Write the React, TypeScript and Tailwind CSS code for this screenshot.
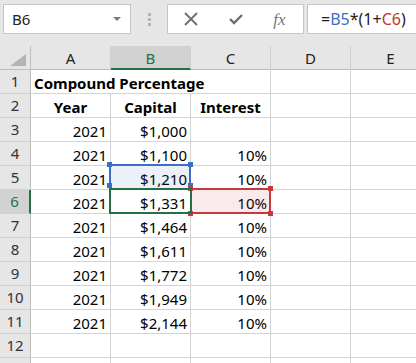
import { ReactNode } from "react";

type Cell = { v?: string; bold?: boolean; align?: "left" | "center" | "right"; open?: boolean };

const cols = ["A", "B", "C", "D", "E"];

const capital = ["$1,000", "$1,100", "$1,210", "$1,331", "$1,464", "$1,611", "$1,772", "$1,949", "$2,144"];

const rows: Cell[][] = [
  [{ v: "Compound Percentage", bold: true, align: "left", open: true }, { open: true }, {}, {}, {}],
  [
    { v: "Year", bold: true, align: "center" },
    { v: "Capital", bold: true, align: "center" },
    { v: "Interest", bold: true, align: "center" },
    {},
    {},
  ],
  ...capital.map((c, i) => [
    { v: "2021", align: "right" as const },
    { v: c, align: "right" as const },
    { v: i === 0 ? "" : "10%", align: "right" as const },
    {},
    {},
  ]),
  [{}, {}, {}, {}, {}],
  [{}, {}, {}, {}, {}],
];

const font = { fontFamily: '"Noto Sans", "Open Sans", sans-serif' };

function Corner({ className }: { className: string }) {
  return <div className={`absolute w-[5px] h-[5px] ${className}`} />;
}

function TopBar() {
  return (
    <div className="h-[46px] bg-[#e6e6e6] flex items-start pt-[4px] pl-[3px]">
      <div className="w-[128px] h-[30px] bg-white border border-[#c6c6c6] flex items-center justify-between pl-[8px] pr-[9px]">
        <span className="text-[15px] text-[#222] leading-none">B6</span>
        <svg width="8" height="4" viewBox="0 0 8 4">
          <path d="M0 0 L8 0 L4 4 Z" fill="#7a7a7a" />
        </svg>
      </div>
      <div className="w-[36px] h-[30px] flex flex-col items-center justify-center gap-[2px]">
        <div className="w-[3px] h-[3px] bg-[#b3b3b3]" />
        <div className="w-[3px] h-[3px] bg-[#b3b3b3]" />
        <div className="w-[3px] h-[3px] bg-[#b3b3b3]" />
      </div>
      <div className="w-[137px] h-[30px] bg-white border border-[#c6c6c6] flex items-center">
        <div className="w-[44px] flex justify-center pl-[1px]">
          <svg width="14" height="14" viewBox="0 0 14 14">
            <path d="M1 1 L13 13 M13 1 L1 13" stroke="#6e6e6e" strokeWidth="1.8" />
          </svg>
        </div>
        <div className="w-[46px] flex justify-center pl-[2px]">
          <svg width="14" height="12" viewBox="0 0 14 12">
            <path d="M1 6 L5 10 L13 2" stroke="#6e6e6e" strokeWidth="2.4" fill="none" />
          </svg>
        </div>
        <div className="flex-1 flex justify-center pr-[2px]">
          <span
            className="italic text-[17px] text-[#777] leading-none"
            style={{ fontFamily: '"Liberation Serif", "DejaVu Serif", serif' }}
          >
            fx
          </span>
        </div>
      </div>
      <div className="ml-[3px] flex-1 h-[30px] bg-white border border-[#c6c6c6] border-r-0 flex items-center pl-[13px] text-[16px] text-[#222] leading-none">
        <span>=</span>
        <span className="text-[#3a6fc4]">B5</span>
        <span>*(1+</span>
        <span className="text-[#c0392b]">C6</span>
        <span>)</span>
      </div>
    </div>
  );
}

function HeaderRow() {
  return (
    <div className="flex h-[24px]">
      <div className="w-[31px] shrink-0 bg-[#e6e6e6] border-r border-b border-[#bdbdbd] flex items-end justify-end pr-[4px] pb-[3px]">
        <svg width="16" height="12" viewBox="0 0 16 12">
          <path d="M16 0 L16 12 L0 12 Z" fill="#b4b4b4" />
        </svg>
      </div>
      {cols.map((c) => {
        const sel = c === "B";
        return (
          <div
            key={c}
            className={`w-[80px] shrink-0 flex items-center justify-center text-[15px] border-r border-[#d0d0d0] ${
              sel ? "bg-[#d2d2d2] text-[#217346] border-b-2 border-b-[#217346]" : "bg-[#e6e6e6] text-[#222] border-b border-b-[#bdbdbd]"
            }`}
          >
            <span className="pt-[2px]">{c}</span>
          </div>
        );
      })}
    </div>
  );
}

function Row({ n, cells }: { n: number; cells: Cell[] }) {
  const sel = n === 6;
  return (
    <div className="flex h-[24px]">
      <div
        className={`w-[31px] shrink-0 border-b border-b-[#d0d0d0] flex items-center justify-center text-[15px] ${
          sel ? "bg-[#d2d2d2] text-[#217346] border-r-2 border-r-[#217346]" : "bg-[#e6e6e6] text-[#333] border-r border-r-[#bdbdbd]"
        }`}
      >
        {n < 13 ? n : ""}
      </div>
      {cells.map((c, i) => (
        <Data key={i} cell={c} />
      ))}
    </div>
  );
}

function Data({ cell }: { cell: Cell }): ReactNode {
  const align = cell.align === "center" ? "justify-center" : cell.align === "left" ? "justify-start pl-[3px]" : "justify-end pr-[3px]";
  return (
    <div
      className={`w-[80px] shrink-0 border-b border-[#d4d4d4] flex items-end whitespace-nowrap text-[15px] leading-[20px] text-black ${align} ${
        cell.open ? "" : "border-r"
      } ${cell.bold ? "font-bold" : ""}`}
    >
      {cell.v}
    </div>
  );
}

export default function App() {
  return (
    <div className="relative w-[416px] h-[363px] overflow-hidden bg-white" style={font}>
      <TopBar />
      <HeaderRow />
      <div>
        {rows.map((r, i) => (
          <Row key={i} n={i + 1} cells={r} />
        ))}
      </div>

      {/* B5 reference, bottom edge sits under the active cell */}
      <div className="absolute left-[109px] top-[164px] w-[82px] h-[26px] border-2 border-[#3a6fc4] bg-[#3a6fc4]/10">
        <Corner className="-left-[4px] -top-[4px] bg-[#3a6fc4]" />
        <Corner className="-right-[4px] -top-[4px] bg-[#3a6fc4]" />
        <Corner className="-left-[4px] bottom-0 bg-[#3a6fc4]" />
        <Corner className="-right-[4px] bottom-0 bg-[#3a6fc4]" />
      </div>
      {/* C6 reference */}
      <div className="absolute left-[190px] top-[188px] w-[81px] h-[26px] border-2 border-[#c8393f] bg-[#c8393f]/10">
        <Corner className="-left-[4px] -top-[4px] bg-[#c8393f]" />
        <Corner className="-right-[4px] -top-[4px] bg-[#c8393f]" />
        <Corner className="-left-[4px] -bottom-[4px] bg-[#c8393f]" />
        <Corner className="-right-[4px] -bottom-[4px] bg-[#c8393f]" />
      </div>
      {/* active cell B6 */}
      <div className="absolute left-[109px] top-[188px] w-[83px] h-[26px] border-2 border-[#217346]" />
    </div>
  );
}
